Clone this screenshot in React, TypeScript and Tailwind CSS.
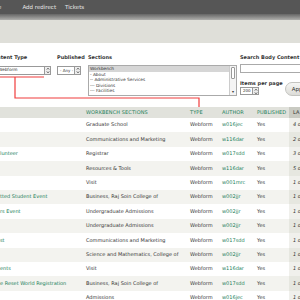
import React from "react";

const rows = [
  { t: "", s: "Graduate School", a: "w016jec", l: "4" },
  { t: "", s: "Communications and Marketing", a: "w116dar", l: "2" },
  { t: "lunteer", s: "Registrar", a: "w017sdd", l: "3" },
  { t: "", s: "Resources & Tools", a: "w116dar", l: "5" },
  { t: "", s: "Visit", a: "w001mrc", l: "1" },
  { t: "tted Student Event", s: "Business, Raj Soin College of", a: "w002jjr", l: "1" },
  { t: "rs Event", s: "Undergraduate Admissions", a: "w002jjr", l: "1" },
  { t: "", s: "Undergraduate Admissions", a: "w002jjr", l: "1" },
  { t: "st", s: "Communications and Marketing", a: "w017sdd", l: "1" },
  { t: "", s: "Science and Mathematics, College of", a: "w002jjr", l: "1" },
  { t: "ents", s: "Visit", a: "w116dar", l: "1" },
  { t: "e Reset World Registration", s: "Business, Raj Soin College of", a: "w017sdd", l: "1" },
  { t: "", s: "Admissions", a: "w016jec", l: "1" },
];

function Arrow() {
  return (
    <span className="flex h-full w-[6px] shrink-0 items-center justify-center border-l border-[#999] bg-[#eee]">
      <svg width="4" height="5" viewBox="0 0 4 5">
        <path d="M0.6 1.4 L2 0.3 L3.4 1.4 M0.6 3.6 L2 4.7 L3.4 3.6" fill="none" stroke="#333" strokeWidth="0.7" />
      </svg>
    </span>
  );
}

export default function App() {
  return (
    <div
      className="relative h-[300px] w-[300px] overflow-hidden bg-white text-[#333]"
      style={{ fontFamily: '"DejaVu Sans", Verdana, sans-serif' }}
    >
      {/* top toolbar */}
      <div className="flex h-[14px] items-center gap-[9px] bg-[#565656] text-[5.5px] text-[#e6e6e6]">
        <span className="-ml-[2px]">e</span>
        <span className="ml-[12px]">Add redirect</span>
        <span>Tickets</span>
      </div>
      <div className="h-[6px] bg-gradient-to-b from-[#666] to-[#b0b0ad]" />
      <div className="h-[23px] bg-[#dfdfd9]" />

      {/* filter form */}
      <div className="flex h-[64px] pt-[11px] text-[5px]">
        <div className="-ml-[10px] flex w-[62px] shrink-0 flex-col">
          <span className="whitespace-nowrap font-bold leading-[6px] text-[#333]">Content Type</span>
          <div className="mt-[6px] flex h-[9px] w-[61px] items-center justify-between border border-[#999] bg-white pl-[7px] text-[4.3px]">
            <span>Webform</span>
            <Arrow />
          </div>
        </div>
        <div className="ml-[5px] flex w-[29px] shrink-0 flex-col">
          <span className="whitespace-nowrap font-bold leading-[6px]">Published</span>
          <div className="mt-[6px] flex h-[9px] w-[24px] items-center justify-between border border-[#999] bg-white pl-[2px] text-[4px]">
            <span className="whitespace-nowrap">- Any -</span>
            <Arrow />
          </div>
        </div>
        <div className="ml-[2px] flex w-[152px] shrink-0 flex-col">
          <span className="font-bold leading-[6px]">Sections</span>
          <div className="mt-[5px] flex h-[31px] w-[149px] border border-[#aaa] bg-white text-[4.3px] leading-[5.6px]">
            <div className="flex flex-1 flex-col whitespace-nowrap">
              <span className="bg-[#d6d6d6] pl-[1px]">Workbench</span>
              <span className="pl-[1px]">- About</span>
              <span className="pl-[1px]">-- Administrative Services</span>
              <span className="pl-[1px]">--- Divisions</span>
              <span className="pl-[1px]">--- Facilities</span>
            </div>
            <div className="flex w-[7px] flex-col items-center justify-between border-l border-[#ccc] bg-[#f4f4f4] py-[1px]">
              <span className="h-[12px] w-[4px] rounded-[1px] border border-[#999] bg-white" />
              <span className="text-[4px] leading-[4px]">▾</span>
            </div>
          </div>
        </div>
        <div className="flex shrink-0 flex-col">
          <span className="whitespace-nowrap font-bold leading-[6px]">Search Body Content</span>
          <div className="mt-[4px] h-[9px] w-[70px] border border-[#aaa] bg-white" />
          <div className="flex">
            <div className="flex flex-col">
              <span className="mt-[7px] whitespace-nowrap font-bold leading-[6px]">Items per page</span>
              <div className="mt-[1px] flex h-[8px] w-[19px] items-center justify-between border border-[#999] bg-white pl-[2px] text-[4px]">
                <span>200</span>
                <Arrow />
              </div>
            </div>
            <div className="ml-[2px] mt-[9px] flex h-[14px] w-[34px] shrink-0 items-center rounded-[7px] border border-[#c4c4c0] bg-gradient-to-b from-[#f6f6f4] to-[#dcdcd8] pl-[6px] text-[5.5px]">
              Apply
            </div>
          </div>
        </div>
      </div>

      {/* table */}
      <div className="text-[5px]">
        <div className="flex h-[11px] items-center bg-[#e1e2dc] uppercase tracking-[0.1px] text-[#21805a]">
          <div className="w-[82px] shrink-0" />
          <div className="w-[104px] shrink-0 pl-[4px]">Workbench Sections</div>
          <div className="w-[32px] shrink-0 pl-[4px]">Type</div>
          <div className="w-[35px] shrink-0 pl-[4px]">Author</div>
          <div className="w-[36px] shrink-0 pl-[4px]">Published</div>
          <div className="flex h-full flex-1 items-center bg-[#c9cac2] pl-[4px] text-[#333]">La</div>
        </div>
        {rows.map((r, i) => (
          <div
            key={i}
            className={`flex h-[14.4px] items-center whitespace-nowrap ${i % 2 === 1 ? "bg-[#f3f3ef]" : "bg-white"}`}
          >
            <div className="w-[82px] shrink-0 overflow-hidden text-[#21805a]">{r.t}</div>
            <div className="w-[104px] shrink-0 overflow-hidden pl-[4px]">{r.s}</div>
            <div className="w-[32px] shrink-0 pl-[4px]">Webform</div>
            <div className="w-[35px] shrink-0 pl-[4px] text-[#21805a]">{r.a}</div>
            <div className="w-[36px] shrink-0 pl-[4px]">Yes</div>
            <div
              className={`flex h-full flex-1 items-center pl-[4px] italic ${i % 2 === 1 ? "bg-[#e6e7e0]" : "bg-[#f0f0ec]"}`}
            >
              {r.l} d
            </div>
          </div>
        ))}
      </div>

      {/* red annotation line */}
      <svg className="pointer-events-none absolute left-0 top-0" width="300" height="300">
        <polyline points="0,77 44,77" fill="none" stroke="#f03c3c" strokeWidth="1.2" />
        <polyline points="15,77 15,98 199,98 199,107" fill="none" stroke="#f03c3c" strokeWidth="1.2" />
      </svg>
    </div>
  );
}
